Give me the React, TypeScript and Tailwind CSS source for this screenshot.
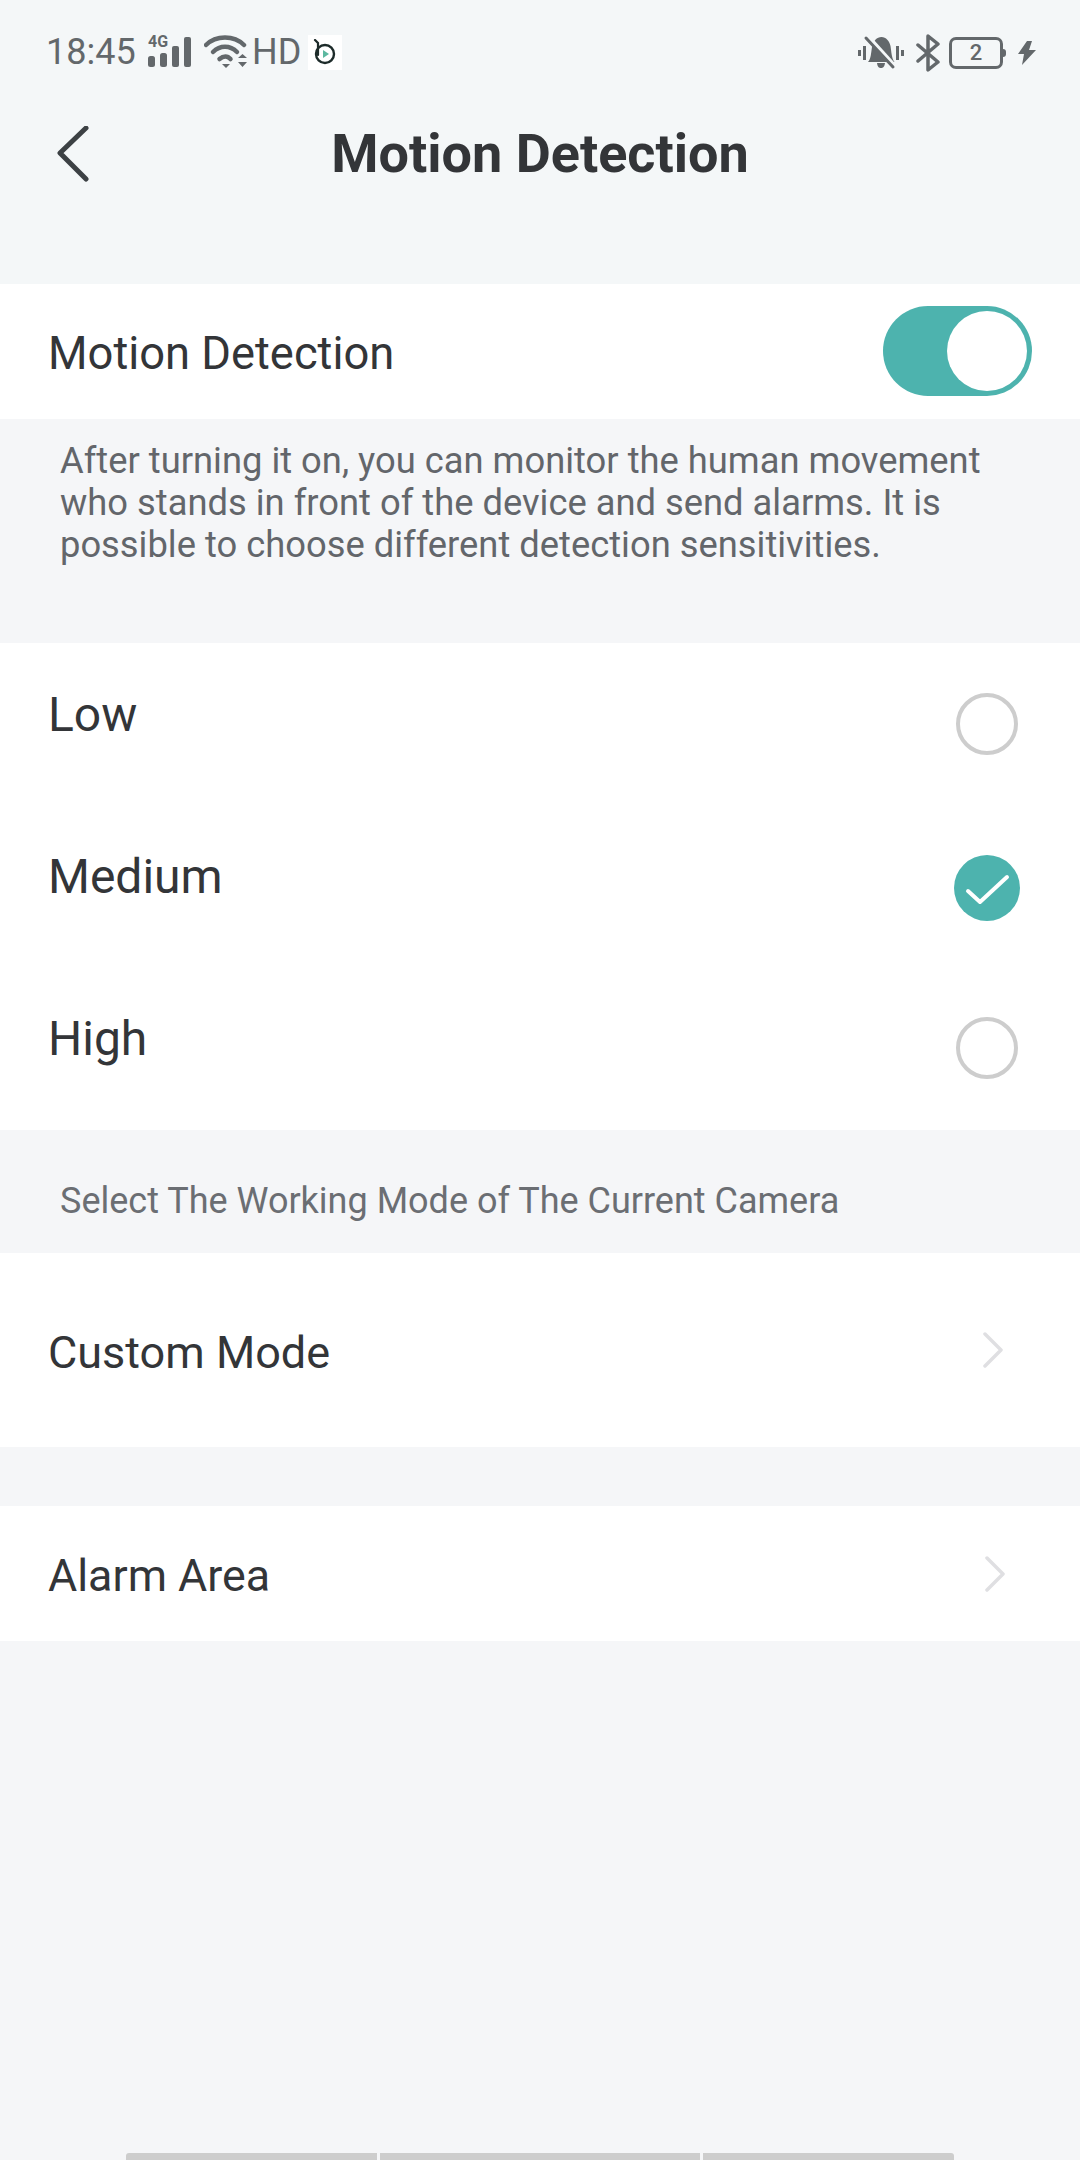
const FONT = "font-['Roboto',sans-serif]";

const Chevron = () => (
  <svg width="20" height="36" viewBox="0 0 20 36" fill="none" stroke="#dfdfe2" strokeWidth="3.5" strokeLinecap="round" strokeLinejoin="round">
    <path d="M2 2l16 16L2 34" />
  </svg>
);

const Radio = ({ checked }: { checked?: boolean }) =>
  checked ? (
    <svg width="66" height="66" viewBox="0 0 66 66" fill="none">
      <circle cx="33" cy="33" r="33" fill="#4db3ae" />
      <path d="M14 36l12 11 27-25" stroke="#fff" strokeWidth="4" strokeLinecap="round" strokeLinejoin="round" />
    </svg>
  ) : (
    <div className="w-[62px] h-[62px] rounded-full border-[4px] border-[#cdcdcd] bg-white mx-[2px]" />
  );

const StatusLeft = () => (
  <div className="flex items-center">
    <span className="text-[36px] leading-none text-[#63686b] w-[102px] -ml-[1px]">18:45</span>
    <div className="relative w-[44px] h-[32px]">
      <span className="absolute left-0 -top-[2px] text-[16px] font-bold leading-none text-[#63686b]">4G</span>
      <svg className="absolute left-0 top-0" width="44" height="32" viewBox="0 0 44 32" fill="#63686b">
        <rect x="0" y="20" width="7" height="11" rx="2.5" />
        <rect x="12" y="17" width="7" height="14" rx="2.5" />
        <rect x="24" y="10" width="7" height="21" rx="2" />
        <rect x="36" y="1" width="7" height="30" rx="2" />
      </svg>
    </div>
    <svg className="ml-[12px]" width="44" height="34" viewBox="0 0 44 34" fill="none" stroke="#63686b" strokeLinecap="round">
      <path d="M2 10C12 0 30 0 40 10" strokeWidth="4.5" />
      <path d="M9 17c7-7 17-7 24 0" strokeWidth="4.5" />
      <path d="M15.5 24c4-3.5 8-3.5 11 0" strokeWidth="4.5" />
      <path d="M18 29h8l-4 4z" fill="#63686b" stroke="none" />
      <path d="M34 23l4.500-4 4.500 4zM34 27h9l-4.500 5z" fill="#63686b" stroke="none" />
    </svg>
    <span className="text-[36px] leading-none text-[#63686b] ml-[4px] w-[56px]">HD</span>
    <div className="w-[34px] h-[35px] bg-white flex items-center justify-center">
      <svg width="24" height="26" viewBox="0 0 24 26" fill="none">
        <path d="M2 1l3 3v12" stroke="#1d2b2a" strokeWidth="2.2" strokeLinecap="round" />
        <circle cx="12" cy="15" r="9" stroke="#1d2b2a" strokeWidth="2.400" />
        <path d="M10 11l6 4-6 4z" fill="#5cb8a0" />
      </svg>
    </div>
  </div>
);

const StatusRight = () => (
  <div className="flex items-center">
    <svg width="46" height="36" viewBox="0 0 46 36" fill="#63686b">
      <rect x="0" y="15" width="3" height="6" />
      <rect x="5" y="11" width="3" height="14" />
      <rect x="38" y="11" width="3" height="14" />
      <rect x="43" y="15" width="3" height="6" />
      <path d="M10 27c3-3 3-9 4-15 1-6 5-10 9.500-10s8 4 9 9c1 6 1 12 4 16zM19 28h8c-.5 4-2 5-4 5s-3.500-1-4-5z" />
      <path d="M9 1l28 31" stroke="#f4f7f8" strokeWidth="5" />
      <path d="M8 3l27 29" stroke="#63686b" strokeWidth="3" strokeLinecap="round" />
    </svg>
    <svg className="ml-[12px]" width="24" height="38" viewBox="0 0 24 38" fill="none" stroke="#63686b" strokeWidth="3.500" strokeLinecap="round" strokeLinejoin="round">
      <path d="M2 11l20 17-10 8V2l10 8L2 27" />
    </svg>
    <div className="ml-[9px] w-[54px] h-[32px] rounded-[7px] border-[3px] border-[#63686b] flex items-center justify-center text-[22px] font-medium leading-none text-[#63686b]">
      2
    </div>
    <div className="w-[3px] h-[8px] rounded-r-[3px] bg-[#63686b] mr-[12px]" />
    <svg width="18" height="24" viewBox="0 0 18 24" fill="#63686b">
      <path d="M9 0L0 13h6l-2 11 14-15h-7l3-9z" />
    </svg>
  </div>
);

export default function App() {
  return (
    <div className={`${FONT} relative w-[1080px] h-[2160px] overflow-hidden bg-[#f5f6f8] text-[#333538]`}>
      <div className="h-[284px] bg-[#f4f7f8]">
        <div className="h-[76px] pl-[47px] pr-[44px] pt-[34px] flex items-start justify-between">
          <StatusLeft />
          <StatusRight />
        </div>
        <div className="relative mt-[38px] h-[80px] flex items-center justify-center">
          <svg className="absolute left-[57px] top-[12px]" width="32" height="56" viewBox="0 0 32 56" fill="none" stroke="#3c4144" strokeWidth="5" strokeLinecap="round" strokeLinejoin="round">
            <path d="M29 2L3 27l26 26" />
          </svg>
          <h1 className="text-[54px] font-bold leading-none text-[#333538]">Motion Detection</h1>
        </div>
      </div>

      <div className="h-[135px] bg-white pl-[48px] pr-[48px] flex items-center justify-between">
        <span className="text-[45.3px] leading-none pt-[5px]">Motion Detection</span>
        <div className="w-[149px] h-[90px] -mt-[2px] rounded-full bg-[#4db3ae] flex items-center justify-end pr-[5px]">
          <div className="w-[80px] h-[80px] rounded-full bg-white" />
        </div>
      </div>

      <div className="h-[224px] pl-[60px] pr-[60px] pt-[21px] text-[36.35px] leading-[42px] text-[#63666b]">
        After turning it on, you can monitor the human movement who stands in front of the device and send alarms. It is possible to choose different detection sensitivities.
      </div>

      <div className="h-[487px] bg-white pl-[48px] pr-[60px] flex flex-col">
        {[
          { label: 'Low', checked: false },
          { label: 'Medium', checked: true },
          { label: 'High', checked: false },
        ].map((o) => (
          <div key={o.label} className="h-[162px] flex justify-between items-start pt-[44px]">
            <span className="text-[48px] leading-[56px]">{o.label}</span>
            <div className="mt-[6px]">
              <Radio checked={o.checked} />
            </div>
          </div>
        ))}
      </div>

      <div className="h-[123px] pl-[60px] pt-[50px] text-[36px] leading-[42px] text-[#6b6e73]">
        Select The Working Mode of The Current Camera
      </div>

      <div className="h-[194px] bg-white pl-[48px] pr-[77px] flex items-center justify-between">
        <span className="text-[45px] leading-none pt-[4px]">Custom Mode</span>
        <Chevron />
      </div>

      <div className="h-[59px]" />

      <div className="h-[135px] bg-white pl-[48px] pr-[75px] flex items-center justify-between">
        <span className="text-[44.8px] leading-none pt-[5px]">Alarm Area</span>
        <Chevron />
      </div>

      <div className="absolute bottom-0 left-[126px] flex gap-[3px]">
        <div className="w-[251px] h-[7px] bg-[#cdcdcd] rounded-tl-[3px]" />
        <div className="w-[320px] h-[7px] bg-[#cdcdcd]" />
        <div className="w-[251px] h-[7px] bg-[#cdcdcd] rounded-tr-[3px]" />
      </div>
    </div>
  );
}
